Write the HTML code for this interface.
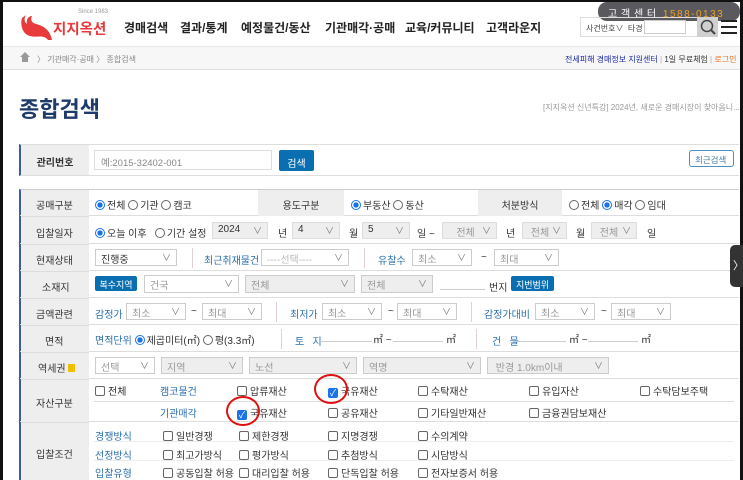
<!DOCTYPE html>
<html><head><meta charset="utf-8"><style>
*{margin:0;padding:0;box-sizing:border-box}
body{width:743px;height:480px;overflow:hidden;background:#fff;font-family:"Liberation Sans","Noto Sans CJK KR",sans-serif;position:relative;color:#333}
.a{position:absolute;white-space:nowrap}
.frame{position:absolute;left:0;top:0;width:743px;height:480px;border-left:3px solid #111;border-top:2px solid #111;border-right:3px solid #111;pointer-events:none;z-index:10}
.nav{font-size:12px;font-weight:bold;color:#222;top:19px}
.lbl{background:#eeeeee;font-size:10px;color:#333;text-align:center;position:absolute}
.row{position:absolute;left:20px;width:719px;border-bottom:1px solid #ddd}
.t{font-size:10px;color:#333;position:absolute;white-space:nowrap}
.b{color:#2a6fb0}
.sel{position:absolute;height:17px;border:1px solid #ccc;background:#fff;font-size:10px;color:#999;padding:1px 5px}
.sel.g{background:#eee}
.sel::after{content:"∨";position:absolute;right:5px;top:1px;color:#777;font-size:9px}
.rd{display:inline-block;width:10px;height:10px;border:1px solid #666;border-radius:50%;vertical-align:-1px;margin-right:2px;background:#fff}
.rd.on{border:1px solid #1a73e8;background:radial-gradient(circle,#1a73e8 45%,#fff 50%)}
.cb{display:inline-block;width:10px;height:10px;border:1px solid #666;border-radius:2px;vertical-align:-1px;margin-right:3px;background:#fff}
.cb.on{background:#1a73e8;border-color:#1a73e8;color:#fff;font-size:9px;line-height:9px;text-align:center}
.btn{position:absolute;background:#0a6fb0;color:#fff;font-size:9px;text-align:center;border-radius:2px}
.vl{position:absolute;width:1px;background:#e3d0d0}
.ul{position:absolute;border-bottom:1px solid #ccc;height:12px}
.circ{position:absolute;width:34px;height:30px;border:2px solid #e01010;border-radius:50%}
</style></head><body>
<div class="frame"></div>
<!-- header -->
<div class="a" style="left:598px;top:2px;width:142px;height:19px;background:#5a5a5e;border-radius:9px;color:#fff;font-size:10px;padding:3px 0 0 10px;letter-spacing:0.5px">고 객 센 터 <span style="color:#f0a020;margin-left:3px;letter-spacing:1.5px">1588-0133</span></div>
<svg class="a" style="left:18px;top:12px" width="36" height="30" viewBox="0 0 36 30"><path d="M4 6 C2 12 4 22 12 24 C18 26 26 22 30 28 L34 28 C32 18 26 14 18 12 C14 11 12 8 14 4 C10 4 8 8 9 12 C6 10 6 6 8 3 Z" fill="#e83a3a"/></svg>
<div class="a" style="left:53px;top:18px;font-size:14.5px;font-weight:bold;color:#e83a3a">지지옥션</div>
<div class="a" style="left:78px;top:9px;font-size:6px;color:#999">Since 1983</div>
<div class="a nav" style="left:124px">경매검색</div>
<div class="a nav" style="left:180px">결과/통계</div>
<div class="a nav" style="left:241px">예정물건/동산</div>
<div class="a nav" style="left:325px">기관매각·공매</div>
<div class="a nav" style="left:405px">교육/커뮤니티</div>
<div class="a nav" style="left:486px">고객라운지</div>
<div class="a" style="left:580px;top:17px;width:118px;height:20px;border:1px solid #ddd;font-size:8px;color:#444;padding:5px 0 0 5px">사건번호∨ &nbsp;타경</div>
<div class="a" style="left:644px;top:20px;width:42px;height:14px;border:1px solid #ccc;background:#fff"></div>
<div class="a" style="left:697px;top:17px;width:21px;height:20px;background:#d0d0d0"></div>
<svg class="a" style="left:699px;top:18px" width="18" height="18"><circle cx="8" cy="8" r="5.5" fill="none" stroke="#444" stroke-width="1.5"/><path d="M12 12 L16 16" stroke="#444" stroke-width="2"/></svg>
<div class="a" style="left:721px;top:20px;width:16px;height:2px;background:#222;box-shadow:0 6px 0 #222,0 12px 0 #222"></div>
<div class="a" style="left:3px;top:46px;width:737px;height:24px;background:#f7f7f7;border-top:1px solid #e8e8e8;border-bottom:1px solid #e0e0e0"></div>
<svg class="a" style="left:19px;top:51px" width="12" height="12"><path d="M6 1 L11 6 L9 6 L9 11 L3 11 L3 6 L1 6 Z" fill="#999"/></svg>
<div class="a" style="left:37px;top:54px;font-size:8px;color:#888">〉 기관매각·공매 〉 종합검색</div>
<div class="a" style="left:565px;top:54px;font-size:8px;color:#1a2aa0">전세피해 경매정보 지원센터 <span style="color:#aaa">|</span> <span style="color:#333">1일 무료체험</span> <span style="color:#aaa">|</span> <span style="color:#e87020">로그인</span></div>
<div class="a" style="left:19px;top:92px;font-size:22px;font-weight:bold;color:#1f3b6a">종합검색</div>
<div class="a" style="left:543px;top:102px;font-size:8px;color:#999">[지지옥션 신년특강] 2024년, 새로운 경매시장이 찾아옵니...</div>
<!-- 관리번호 -->
<div class="a" style="left:19px;top:144px;width:720px;height:32px;border-left:2px solid #3a5f9a;border-top:1px solid #ddd;border-bottom:1px solid #ddd"></div>
<div class="lbl" style="left:21px;top:145px;width:68px;height:30px;padding-top:9px;font-weight:bold">관리번호</div>
<div class="a" style="left:94px;top:150px;width:178px;height:20px;border:1px solid #ddd;font-size:9.5px;color:#888;padding:4px 0 0 6px">예:2015-32402-001</div>
<div class="btn" style="left:279px;top:150px;width:35px;height:21px;font-size:10px;padding-top:5px">검색</div>
<div class="a" style="left:689px;top:150px;width:45px;height:17px;border:1px solid #4a90c0;border-radius:3px;font-size:8.5px;color:#4a80b0;padding:3px 0 0 5px">최근검색</div>
<!-- main table -->
<div class="a" style="left:19px;top:189px;width:720px;height:291px;border-left:2px solid #3a5f9a;border-top:1px solid #ccc"></div>
<div class="row" style="top:189px;height:27px"></div>
<div class="row" style="top:216px;height:28px"></div>
<div class="row" style="top:244px;height:27px"></div>
<div class="row" style="top:271px;height:27px"></div>
<div class="row" style="top:298px;height:27px"></div>
<div class="row" style="top:325px;height:27px"></div>
<div class="row" style="top:352px;height:27px"></div>
<div class="row" style="top:379px;height:43px"></div>
<div class="lbl" style="left:21px;top:190px;width:68px;height:290px"></div>
<div class="t" style="left:36px;top:197px">공매구분</div>
<div class="t" style="left:36px;top:225px">입찰일자</div>
<div class="t" style="left:36px;top:252px">현재상태</div>
<div class="t" style="left:42px;top:279px">소재지</div>
<div class="t" style="left:36px;top:306px">금액관련</div>
<div class="t" style="left:45px;top:333px">면적</div>
<div class="t" style="left:38px;top:360px">역세권<span style="display:inline-block;width:7px;height:8px;background:#f0c000;margin-left:2px"></span></div>
<div class="t" style="left:36px;top:395px">자산구분</div>
<div class="t" style="left:36px;top:446px">입찰조건</div>
<div class="a" style="left:21px;top:216px;width:68px;height:1px;background:#ddd"></div>
<div class="a" style="left:21px;top:244px;width:68px;height:1px;background:#ddd"></div>
<div class="a" style="left:21px;top:271px;width:68px;height:1px;background:#ddd"></div>
<div class="a" style="left:21px;top:298px;width:68px;height:1px;background:#ddd"></div>
<div class="a" style="left:21px;top:325px;width:68px;height:1px;background:#ddd"></div>
<div class="a" style="left:21px;top:352px;width:68px;height:1px;background:#ddd"></div>
<div class="a" style="left:21px;top:379px;width:68px;height:1px;background:#ddd"></div>
<div class="a" style="left:21px;top:422px;width:68px;height:1px;background:#ddd"></div>
<!-- row1 -->
<div class="t" style="left:95px;top:197px"><span class="rd on"></span>전체 <span class="rd"></span>기관 <span class="rd"></span>캠코</div>
<div class="lbl" style="left:258px;top:190px;width:86px;height:26px;padding-top:7px">용도구분</div>
<div class="t" style="left:351px;top:197px"><span class="rd on"></span>부동산 <span class="rd"></span>동산</div>
<div class="lbl" style="left:478px;top:190px;width:84px;height:26px;padding-top:7px">처분방식</div>
<div class="t" style="left:569px;top:197px"><span class="rd"></span>전체 <span class="rd on"></span>매각 <span class="rd"></span>임대</div>
<!-- row2 -->
<div class="t" style="left:95px;top:225px"><span class="rd on"></span>오늘 이후 &nbsp;&nbsp;<span class="rd"></span>기간 설정</div>
<div class="sel" style="left:212px;top:222px;width:56px;color:#333;border-color:#ddd;background:#eee">2024</div>
<div class="t" style="left:278px;top:225px">년</div>
<div class="sel" style="left:292px;top:222px;width:48px;color:#333;border-color:#ddd;background:#eee">4</div>
<div class="t" style="left:349px;top:225px">월</div>
<div class="sel" style="left:362px;top:222px;width:48px;color:#333;border-color:#ddd;background:#eee">5</div>
<div class="t" style="left:417px;top:225px">일 ~</div>
<div class="sel g" style="left:442px;top:222px;width:55px;border-color:#ddd">&nbsp;&nbsp;&nbsp;전체</div>
<div class="t" style="left:506px;top:225px">년</div>
<div class="sel g" style="left:522px;top:222px;width:45px;border-color:#ddd">&nbsp;전체</div>
<div class="t" style="left:576px;top:225px">월</div>
<div class="sel g" style="left:591px;top:222px;width:46px;border-color:#ddd">&nbsp;전체</div>
<div class="t" style="left:647px;top:225px">일</div>
<!-- row3 -->
<div class="sel" style="left:95px;top:249px;width:82px;color:#333">진행중</div>
<div class="vl" style="left:192px;top:248px;height:20px"></div>
<div class="t b" style="left:204px;top:252px">최근취재물건</div>
<div class="sel" style="left:261px;top:249px;width:88px;color:#bbb">----선택----</div>
<div class="vl" style="left:364px;top:248px;height:20px"></div>
<div class="t b" style="left:378px;top:252px">유찰수</div>
<div class="sel" style="left:412px;top:249px;width:60px">최소</div>
<div class="t" style="left:481px;top:252px">~</div>
<div class="sel" style="left:494px;top:249px;width:65px">최대</div>
<!-- row4 -->
<div class="btn" style="left:95px;top:276px;width:42px;height:15px;padding-top:2px">복수지역</div>
<div class="sel" style="left:144px;top:275px;width:95px;height:18px">건국</div>
<div class="sel g" style="left:245px;top:275px;width:110px;height:18px">전체</div>
<div class="sel g" style="left:361px;top:275px;width:72px;height:18px">전체</div>
<div class="ul" style="left:440px;top:278px;width:45px"></div>
<div class="t" style="left:489px;top:279px">번지</div>
<div class="btn" style="left:511px;top:276px;width:43px;height:15px;padding-top:2px">지번범위</div>
<!-- row5 -->
<div class="t b" style="left:95px;top:306px">감정가</div>
<div class="sel" style="left:126px;top:303px;width:60px">최소</div>
<div class="t" style="left:191px;top:306px">~</div>
<div class="sel" style="left:202px;top:303px;width:60px">최대</div>
<div class="vl" style="left:276px;top:302px;height:20px"></div>
<div class="t b" style="left:290px;top:306px">최저가</div>
<div class="sel" style="left:322px;top:303px;width:60px">최소</div>
<div class="t" style="left:388px;top:306px">~</div>
<div class="sel" style="left:397px;top:303px;width:60px">최대</div>
<div class="vl" style="left:471px;top:302px;height:20px"></div>
<div class="t b" style="left:484px;top:306px">감정가대비</div>
<div class="sel" style="left:535px;top:303px;width:60px">최소</div>
<div class="t" style="left:601px;top:306px">~</div>
<div class="sel" style="left:611px;top:303px;width:60px">최대</div>
<!-- row6 -->
<div class="t" style="left:95px;top:332px"><span class="b">면적단위</span> <span class="rd on"></span>제곱미터(㎡) <span class="rd"></span>평(3.3㎡)</div>
<div class="vl" style="left:281px;top:329px;height:20px"></div>
<div class="t b" style="left:295px;top:333px">토 &nbsp;&nbsp;지</div>
<div class="ul" style="left:320px;top:330px;width:52px"></div>
<div class="t" style="left:373px;top:331px">㎡ ~</div>
<div class="ul" style="left:393px;top:330px;width:50px"></div>
<div class="t" style="left:446px;top:331px">㎡</div>
<div class="vl" style="left:476px;top:329px;height:20px"></div>
<div class="t b" style="left:492px;top:333px">건 &nbsp;&nbsp;물</div>
<div class="ul" style="left:514px;top:330px;width:52px"></div>
<div class="t" style="left:569px;top:331px">㎡ ~</div>
<div class="ul" style="left:588px;top:330px;width:50px"></div>
<div class="t" style="left:641px;top:331px">㎡</div>
<!-- row7 -->
<div class="sel" style="left:95px;top:357px;width:60px">선택</div>
<div class="sel g" style="left:161px;top:357px;width:82px">지역</div>
<div class="sel g" style="left:249px;top:357px;width:108px">노선</div>
<div class="sel g" style="left:363px;top:357px;width:118px">역명</div>
<div class="sel g" style="left:487px;top:357px;width:122px">&nbsp;반경 1.0km이내</div>
<!-- row8 -->
<div class="t" style="left:95px;top:383px"><span class="cb"></span>전체</div>
<div class="t b" style="left:160px;top:383px">캠코물건</div>
<div class="t" style="left:237px;top:383px"><span class="cb"></span>압류재산</div>
<div class="t" style="left:328px;top:383px"><span class="cb on">✓</span>국유재산</div>
<div class="t" style="left:418px;top:383px"><span class="cb"></span>수탁재산</div>
<div class="t" style="left:529px;top:383px"><span class="cb"></span>유입자산</div>
<div class="t" style="left:640px;top:383px"><span class="cb"></span>수탁담보주택</div>
<div class="a" style="left:94px;top:401px;width:640px;height:1px;background:#ddd"></div>
<div class="t b" style="left:160px;top:405px">기관매각</div>
<div class="t" style="left:237px;top:405px"><span class="cb on">✓</span>국유재산</div>
<div class="t" style="left:328px;top:405px"><span class="cb"></span>공유재산</div>
<div class="t" style="left:418px;top:405px"><span class="cb"></span>기타일반재산</div>
<div class="t" style="left:529px;top:405px"><span class="cb"></span>금융권담보재산</div>
<div class="circ" style="left:314px;top:374px"></div>
<div class="circ" style="left:226px;top:396px"></div>
<!-- row9 -->
<div class="t b" style="left:95px;top:428px">경쟁방식</div>
<div class="t" style="left:163px;top:428px"><span class="cb"></span>일반경쟁</div>
<div class="t" style="left:239px;top:428px"><span class="cb"></span>제한경쟁</div>
<div class="t" style="left:328px;top:428px"><span class="cb"></span>지명경쟁</div>
<div class="t" style="left:418px;top:428px"><span class="cb"></span>수의계약</div>
<div class="a" style="left:94px;top:441px;width:640px;height:1px;background:#eee"></div>
<div class="t b" style="left:95px;top:447px">선정방식</div>
<div class="t" style="left:163px;top:447px"><span class="cb"></span>최고가방식</div>
<div class="t" style="left:239px;top:447px"><span class="cb"></span>평가방식</div>
<div class="t" style="left:328px;top:447px"><span class="cb"></span>추첨방식</div>
<div class="t" style="left:418px;top:447px"><span class="cb"></span>시담방식</div>
<div class="a" style="left:94px;top:460px;width:640px;height:1px;background:#eee"></div>
<div class="t b" style="left:95px;top:465px">입찰유형</div>
<div class="t" style="left:163px;top:465px"><span class="cb"></span>공동입찰 허용</div>
<div class="t" style="left:239px;top:465px"><span class="cb"></span>대리입찰 허용</div>
<div class="t" style="left:328px;top:465px"><span class="cb"></span>단독입찰 허용</div>
<div class="t" style="left:418px;top:465px"><span class="cb"></span>전자보증서 허용</div>
<!-- side tab -->
<div class="a" style="left:730px;top:245px;width:13px;height:42px;background:#333;border-radius:5px 0 0 5px;color:#fff;font-size:11px;padding:12px 0 0 3px;z-index:11">〉</div>
</body></html>
